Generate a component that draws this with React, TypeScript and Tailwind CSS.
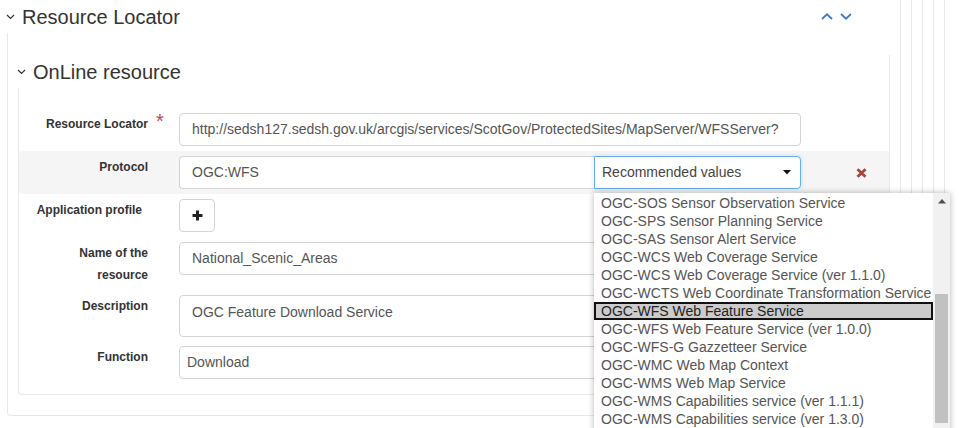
const options = [
  'OGC-SOS Sensor Observation Service',
  'OGC-SPS Sensor Planning Service',
  'OGC-SAS Sensor Alert Service',
  'OGC-WCS Web Coverage Service',
  'OGC-WCS Web Coverage Service (ver 1.1.0)',
  'OGC-WCTS Web Coordinate Transformation Service',
  'OGC-WFS Web Feature Service',
  'OGC-WFS Web Feature Service (ver 1.0.0)',
  'OGC-WFS-G Gazzetteer Service',
  'OGC-WMC Web Map Context',
  'OGC-WMS Web Map Service',
  'OGC-WMS Capabilities service (ver 1.1.1)',
  'OGC-WMS Capabilities service (ver 1.3.0)',
];

const Caret = () => (
  <svg width="9" height="6" viewBox="0 0 9 6" className="shrink-0">
    <polyline points="1,1 4.5,4.5 8,1" fill="none" stroke="#333" strokeWidth="1.2" />
  </svg>
);

const Label = ({ children, className = '' }: { children: React.ReactNode; className?: string }) => (
  <div className={`relative w-[144px] shrink-0 text-right text-[12px] font-bold leading-[22px] text-[#333] ${className}`}>
    {children}
  </div>
);

const field = 'h-[33px] rounded-[4px] border border-[#d4d4d4] text-[14px] leading-[31px] text-[#555] bg-white';

const App = () => {
  return (
    <div className="relative h-[428px] w-[968px] overflow-hidden bg-white font-['Liberation_Sans',Arial,sans-serif]">
      <div className="h-full w-[945px] border-r border-[#e8e8e8] pr-[10px]">
        <div className="h-full border-r border-[#e8e8e8] pr-[10px]">
          <div className="h-full border-r border-[#e8e8e8] pr-[10px]">
            <div className="h-full border-r border-[#e8e8e8] pr-[10px]">
              {/* Resource Locator */}
              <div className="ml-[7px] mt-[18px] rounded-b-[4px] border-x border-b border-[#e8e8e8] px-[10px] pb-[20px]">
                <div className="-ml-[18px] -mt-[18px] mr-[20px] flex h-[33px] items-center bg-white pl-[6px] pr-[18px]">
                  <Caret />
                  <span className="ml-[7px] text-[20px] text-[#333]">Resource Locator</span>
                  <div className="ml-auto flex items-center gap-[7px]">
                    <svg width="12" height="7" viewBox="0 0 12 7">
                      <polyline points="1,6 6,1.3 11,6" fill="none" stroke="#3a7bcc" strokeWidth="1.8" />
                    </svg>
                    <svg width="12" height="7" viewBox="0 0 12 7">
                      <polyline points="1,1 6,5.7 11,1" fill="none" stroke="#3a7bcc" strokeWidth="1.8" />
                    </svg>
                  </div>
                </div>

                {/* OnLine resource */}
                <div className="mt-[39px] rounded-b-[4px] border-x border-b border-[#e8e8e8] pb-[10px]">
                  <div className="-ml-[2px] -mt-[17px] flex h-[33px] w-[300px] items-center bg-white">
                    <Caret />
                    <span className="ml-[7px] text-[20px] text-[#333]">OnLine resource</span>
                  </div>

                  <div className="mt-[20px]">
                    <div className="flex pt-[5px] pb-[5px]">
                      <Label className="pr-[15px]">
                        Resource Locator
                        <span className="absolute left-[137px] top-[-3px] text-[20px] font-normal text-[#b94a48]">*</span>
                      </Label>
                      <div className={`${field} ml-[16px] w-[622px] overflow-hidden whitespace-nowrap px-[12px]`}>
                        http://sedsh127.sedsh.gov.uk/arcgis/services/ScotGov/ProtectedSites/MapServer/WFSServer?
                      </div>
                    </div>

                    <div className="flex rounded-[4px] bg-[#f5f5f5] py-[5px]">
                      <Label className="pr-[15px]">Protocol</Label>
                      <div className={`${field} ml-[16px] w-[415px] rounded-r-none border-r-0 px-[12px]`}>OGC:WFS</div>
                      <div className="flex h-[33px] w-[207px] items-center rounded-r-[4px] border border-[#66afe9] bg-white pl-[7px] pr-[9px] text-[14px] text-[#444] shadow-[0_0_4px_rgba(102,175,233,0.35)]">
                        Recommended values
                        <svg width="8" height="5" viewBox="0 0 8 5" className="ml-auto">
                          <polygon points="0,0 8,0 4,4.5" fill="#111" />
                        </svg>
                      </div>
                      <div className="flex items-center pl-[55px]">
                        <svg width="11" height="10" viewBox="0 0 11 10">
                          <path d="M1.5 1.2 L9.5 8.8 M9.5 1.2 L1.5 8.8" stroke="#a94442" strokeWidth="2.8" />
                        </svg>
                      </div>
                    </div>

                    <div className="flex pt-[5px] pb-[5px]">
                      <Label className="pr-[21px]">Application profile</Label>
                      <div className="ml-[16px] flex h-[33px] w-[36px] items-center justify-center rounded-[4px] border border-[#d4d4d4] bg-white">
                        <svg width="11" height="11" viewBox="0 0 11 11">
                          <path d="M5.5 0.5 V10.5 M0.5 5.5 H10.5" stroke="#222" strokeWidth="3" />
                        </svg>
                      </div>
                    </div>

                    <div className="flex pt-[5px] pb-[4px]">
                      <Label className="pr-[15px]">
                        Name of the
                        <br />
                        resource
                      </Label>
                      <div className={`${field} ml-[16px] w-[622px] px-[12px]`}>National_Scenic_Areas</div>
                    </div>

                    <div className="flex pt-[5px] pb-[4px]">
                      <Label className="pr-[15px]">Description</Label>
                      <div className="ml-[16px] h-[42px] w-[622px] rounded-[4px] border border-[#d4d4d4] bg-white px-[12px] pt-[6px] text-[14px] leading-[20px] text-[#555]">
                        OGC Feature Download Service
                      </div>
                    </div>

                    <div className="flex pt-[5px] pb-[5px]">
                      <Label className="pr-[15px]">Function</Label>
                      <div className={`${field} ml-[16px] w-[622px] px-[7px]`}>Download</div>
                    </div>
                  </div>
                </div>
              </div>
            </div>
          </div>
        </div>
      </div>

      {/* open protocol list */}
      <div className="absolute left-[594px] top-[193px] flex h-[260px] w-[356px] bg-white shadow-[0_0_6px_rgba(0,0,0,0.3)]">
        <ul className="w-[339px] pt-[1px]">
          {options.map((o) => (
            <li
              key={o}
              className={`h-[18px] whitespace-nowrap pl-[7px] text-[14px] leading-[18px] ${
                o === 'OGC-WFS Web Feature Service' ? 'bg-[#cccccc] text-[#222] shadow-[inset_0_0_0_2px_#111]' : 'text-[#555]'
              }`}
            >
              {o}
            </li>
          ))}
        </ul>
        <div className="w-[17px] bg-[#f1f1f1]">
          <div className="flex h-[17px] items-center justify-center">
            <svg width="8" height="5" viewBox="0 0 8 5">
              <polygon points="0,4.5 8,4.5 4,0" fill="#505050" />
            </svg>
          </div>
          <div className="mx-[2px] mt-[84px] h-[129px] bg-[#c1c1c1]" />
        </div>
      </div>
    </div>
  );
};

export default App;
